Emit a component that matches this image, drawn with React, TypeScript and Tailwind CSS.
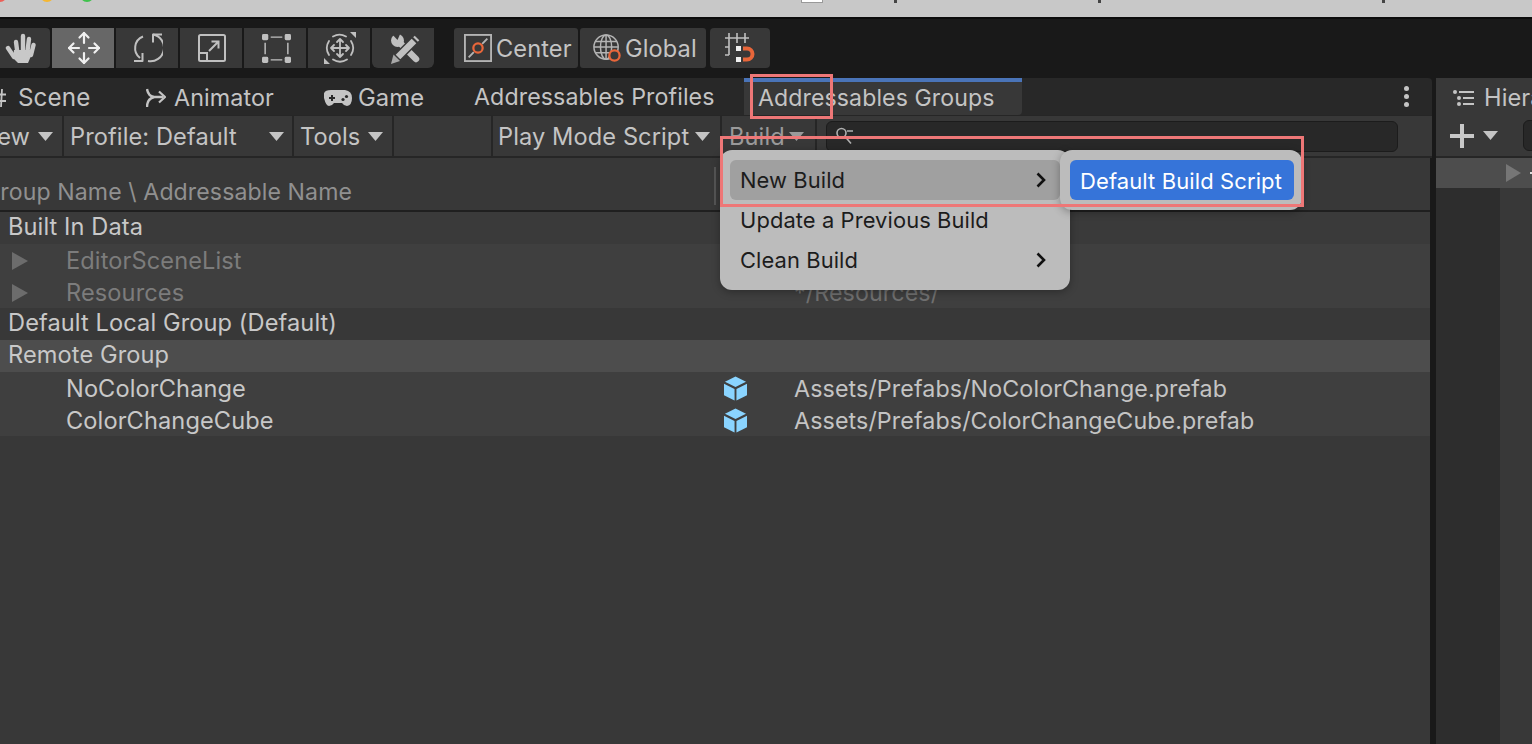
function Caret({ className = "" }: { className?: string }) {
  return (
    <svg width="15" height="9" viewBox="0 0 15 9" className={`shrink-0 ${className}`}>
      <path d="M0 0h15l-7.5 9z" fill="currentColor" />
    </svg>
  );
}

function RowArrow() {
  return (
    <svg width="16" height="18" viewBox="0 0 16 18" className="shrink-0">
      <path d="M0 0l16 9L0 18z" fill="#6c6c6c" />
    </svg>
  );
}

function Chevron() {
  return (
    <svg width="10" height="16" viewBox="0 0 10 16" fill="none" stroke="#111111" strokeWidth="2.6">
      <path d="M1.5 1.5L8 8l-6.5 6.5" />
    </svg>
  );
}

function HandIcon() {
  return (
    <svg width="31" height="31" viewBox="0 0 31 31" fill="#c8c8c8">
      <path d="M9 17h18l-1 6-3 7H13l-5-5z" />
      <g stroke="#c8c8c8" strokeWidth="4.4" strokeLinecap="round" fill="none">
        <path d="M11 9l1.2 9" />
        <path d="M18 3v15" />
        <path d="M24 6l-1.5 12" />
        <path d="M28.5 12L26 22" />
        <path d="M3 15l6 9" />
      </g>
    </svg>
  );
}

function MoveIcon() {
  return (
    <svg width="34" height="34" viewBox="0 0 34 34" fill="none" stroke="#f0f0f0" strokeWidth="2.2" strokeLinecap="round" strokeLinejoin="round">
      <path d="M17 2v10M17 22v10M2 17h10M22 17h10" />
      <path d="M12.5 6.5L17 2l4.5 4.5M12.5 27.5L17 32l4.5-4.5M6.5 12.5L2 17l4.5 4.5M27.5 12.5L32 17l-4.5 4.5" />
    </svg>
  );
}

function RotateIcon() {
  return (
    <svg width="30" height="30" viewBox="0 0 30 30" fill="none" stroke="#c0c0c0" strokeWidth="2" strokeLinejoin="round">
      <path d="M10 3.5A12.5 12.5 0 0 0 7 25" />
      <path d="M20 1.5A12.5 12.5 0 0 1 15 28" />
      <path d="M1 28h8.5v-8" />
      <path d="M29 1.5h-9v8" />
    </svg>
  );
}

function ScaleIcon() {
  return (
    <svg width="28" height="28" viewBox="0 0 28 28" fill="none" stroke="#c0c0c0" strokeWidth="2">
      <rect x="1" y="1" width="26" height="26" rx="1.5" />
      <path d="M1 19h8v8" />
      <path d="M11 17L20.5 7.5M13.5 7.5h7v7" />
    </svg>
  );
}

function RectIcon() {
  return (
    <svg width="29" height="29" viewBox="0 0 30 30" fill="#c0c0c0" stroke="none">
      <rect x="0" y="0" width="6.5" height="6.5" rx="1.5" />
      <rect x="23.5" y="0" width="6.5" height="6.5" rx="1.5" />
      <rect x="0" y="23.5" width="6.5" height="6.5" rx="1.5" />
      <rect x="23.5" y="23.5" width="6.5" height="6.5" rx="1.5" />
      <path d="M9 2.5h12v1.5H9zM9 26h12v1.5H9zM2.5 9H4v12H2.5zM26 9h1.5v12H26z" />
    </svg>
  );
}

function TransformIcon() {
  return (
    <svg width="32" height="32" viewBox="0 0 32 32" fill="none" stroke="#c0c0c0" strokeWidth="1.8" strokeLinecap="round" strokeLinejoin="round">
      <path d="M26 0h6v6z M0 32v-6l6 6z" fill="#c0c0c0" stroke="none" />
      <path d="M9 4.5a13 13 0 0 1 13 0M27 9a13 13 0 0 1 0 14M23 27.5a13 13 0 0 1-14 0M5 23a13 13 0 0 1 0-14" />
      <path d="M16 7v18M7 16h18M13 10l3-3 3 3M13 22l3 3 3-3M10 13l-3 3 3 3M22 13l3 3-3 3" />
    </svg>
  );
}

function BuildToolsIcon() {
  return (
    <svg width="30" height="31" viewBox="0 0 30 31" fill="none">
      {/* wrench */}
      <circle cx="7.5" cy="7.5" r="6.5" fill="#c0c0c0" />
      <path d="M0 -1L7.5 7L11 -1z" fill="#383838" />
      <path d="M10 10l16 16" stroke="#c0c0c0" strokeWidth="6.5" strokeLinecap="round" />
      {/* pencil, sits on top of the wrench */}
      <path d="M7 25L24 8" stroke="#383838" strokeWidth="9.5" />
      <path d="M8 24L24 8" stroke="#c0c0c0" strokeWidth="6.5" />
      <path d="M25.5 6.5L27 5" stroke="#c0c0c0" strokeWidth="6.5" />
      <path d="M1 31l2.5-9.5 6.5 6.5z" fill="#a8a8a8" />
    </svg>
  );
}

function CenterIcon() {
  return (
    <svg width="28" height="28" viewBox="0 0 30 30" fill="none" className="shrink-0">
      <rect x="1" y="1" width="28" height="28" stroke="#b4b4b4" strokeWidth="2" />
      <path d="M5 25l5.5-5.5M19.5 10.5L25 5" stroke="#b4b4b4" strokeWidth="2" />
      <circle cx="15" cy="15" r="5" stroke="#e8663a" strokeWidth="2.4" />
    </svg>
  );
}

function GlobalIcon() {
  return (
    <svg width="28" height="28" viewBox="0 0 30 30" fill="none" stroke="#b4b4b4" strokeWidth="1.6" className="shrink-0">
      <circle cx="14" cy="14" r="13" />
      <ellipse cx="14" cy="14" rx="6" ry="13" />
      <path d="M14 1v26M2.5 8h23M1 14h26M2.5 20h23" />
      <circle cx="23" cy="23" r="5.5" fill="#383838" stroke="#e8663a" strokeWidth="2.4" />
    </svg>
  );
}

function SnapIcon() {
  return (
    <svg width="30" height="30" viewBox="0 0 30 30" fill="none">
      <path d="M0 5h24M4 0v22M12 0v10M20 0v10M0 14h4M0 22h4" stroke="#c0c0c0" strokeWidth="1.6" />
      <rect x="11" y="13" width="5" height="5" fill="#f0f0f0" />
      <rect x="11" y="24" width="5" height="5" fill="#f0f0f0" />
      <path d="M18 15.5h4a5.5 5.5 0 0 1 0 11h-4" stroke="#e8663a" strokeWidth="4" />
    </svg>
  );
}

function AnimatorIcon() {
  return (
    <svg width="20" height="20" viewBox="0 0 20 20" fill="none" stroke="#c4c4c4" strokeWidth="2.4" strokeLinejoin="round">
      <path d="M1 1q1 7 7 8h9" />
      <path d="M1 19q0-8 7-10" />
      <path d="M13 3.5L19 9l-6 5.5" strokeWidth="2.2" />
    </svg>
  );
}

function GameIcon() {
  return (
    <svg width="28" height="16" viewBox="0 0 28 16">
      <path d="M7 0h14q7 1 7 8t-5 8q-3 0-5-3h-8q-2 3-5 3T0 8t7-8z" fill="#c4c4c4" />
      <path d="M5 7h2V5h2v2h2v2H9v2H7V9H5z" fill="#282828" />
      <circle cx="19" cy="9.5" r="1.6" fill="#282828" />
      <circle cx="22.5" cy="6.5" r="1.6" fill="#282828" />
    </svg>
  );
}

function CubeIcon() {
  return (
    <svg width="23" height="25" viewBox="0 0 24 25" className="shrink-0">
      <path d="M12 0l11 5.5L12 11 1 5.5z" fill="#8ad4ff" />
      <path d="M0 7.5l11 5.5v12L0 19.5z" fill="#8ad4ff" />
      <path d="M24 7.5L13 13v12l11-5.5z" fill="#8ad4ff" />
    </svg>
  );
}

function Cell({ active, className = "", children }: { active?: boolean; className?: string; children: React.ReactNode }) {
  return (
    <div className={`h-full flex items-center ${active ? "bg-[#676767]" : "bg-[#383838]"} ${className}`}>
      {children}
    </div>
  );
}

function Seg({ className = "", children }: { className?: string; children?: React.ReactNode }) {
  return <div className={`h-full bg-[#383838] flex items-center shrink-0 ${className}`}>{children}</div>;
}

function Row({ bg, indent, arrow, dim, name, cube, path, pathDim }: {
  bg: string; indent?: boolean; arrow?: boolean; dim?: boolean; name: string; cube?: boolean; path?: string; pathDim?: boolean;
}) {
  return (
    <div className={`h-[32px] flex items-center ${bg} ${indent ? "pt-[1px]" : "pb-[2px]"}`}>
      <div className={`w-[724px] shrink-0 flex items-center text-[23.6px] ${indent ? "pl-[12px]" : "pl-[8px]"}`}>
        {indent && <div className="w-[54px] shrink-0">{arrow && <RowArrow />}</div>}
        <span className={dim ? "text-[#7c7c7c]" : "text-[#c8c8c8]"}>{name}</span>
      </div>
      <div className="w-[71px] shrink-0 flex items-center">{cube && <CubeIcon />}</div>
      {path && <span className={`text-[23.25px] -ml-[1px] ${pathDim ? "text-[#707070]" : "text-[#c4c4c4]"}`}>{path}</span>}
    </div>
  );
}

export default function App() {
  return (
    <div className="relative w-[1532px] h-[744px] overflow-hidden flex flex-col bg-[#191919] font-['Inter',sans-serif] text-[23.6px] leading-none tracking-[0.1px] text-[#c4c4c4]">
      {/* window title bar, only its bottom edge is in the shot */}
      <div className="h-[19px] shrink-0 bg-[#c8c8c8] border-b-2 border-[#0c0c0c] flex items-start overflow-hidden">
        <div className="w-[14px] h-[14px] rounded-full bg-[#ec5f57] -mt-[12px] -ml-[7px] shrink-0" />
        <div className="w-[14px] h-[14px] rounded-full bg-[#f5b731] -mt-[12px] ml-[33px] shrink-0" />
        <div className="w-[14px] h-[14px] rounded-full bg-[#3fc24c] -mt-[12px] ml-[26px] shrink-0" />
        <div className="w-[22px] h-[14px] bg-white border border-[#999999] -mt-[11px] ml-[707px] shrink-0" />
        <div className="w-[3px] h-[3px] bg-[#444444] ml-[71px] shrink-0" />
        <div className="w-[3px] h-[3px] bg-[#444444] ml-[201px] shrink-0" />
        <div className="w-[3px] h-[3px] bg-[#444444] ml-[281px] shrink-0" />
      </div>

      {/* main toolbar */}
      <div className="h-[59px] shrink-0 flex items-start pt-[9px]">
        <div className="h-[40px] flex gap-[2px]">
          <Cell className="w-[50px] rounded-r-[4px] pl-[5px]"><HandIcon /></Cell>
          <Cell active className="w-[62px] justify-center pl-[2px]"><MoveIcon /></Cell>
          <Cell className="w-[62px] justify-center pl-[2px]"><RotateIcon /></Cell>
          <Cell className="w-[62px] justify-center pl-[2px]"><ScaleIcon /></Cell>
          <Cell className="w-[62px] justify-center pl-[2px]"><RectIcon /></Cell>
          <Cell className="w-[62px] justify-center pl-[2px]"><TransformIcon /></Cell>
          <Cell className="w-[62px] rounded-b-[6px] justify-center pl-[4px]"><BuildToolsIcon /></Cell>
        </div>
        <div className="h-[40px] flex ml-[20px]">
          <Cell className="w-[124px] rounded-[3px] gap-[4px] pl-[10px]"><CenterIcon /><span className="pt-[2px]">Center</span></Cell>
          <Cell className="w-[126px] ml-[2px] rounded-[3px] gap-[4px] pl-[13px]"><GlobalIcon /><span className="pt-[2px]">Global</span></Cell>
          <Cell className="w-[60px] ml-[4px] rounded-[4px] justify-center"><SnapIcon /></Cell>
        </div>
      </div>

      <div className="flex-1 min-h-0 flex gap-[4px]">
        {/* addressables window */}
        <div className="w-[1432px] shrink-0 flex flex-col">
          <div className="h-[37px] shrink-0 bg-[#282828] rounded-tr-[4px] flex items-center relative text-[23.3px]">
            <div className="w-[130px] h-full shrink-0 flex items-center overflow-hidden pt-[3px]">
              <svg width="6" height="18" viewBox="0 0 6 18" fill="none" stroke="#c4c4c4" strokeWidth="1.8" className="mr-[12px] shrink-0">
                <path d="M2 0L1 18M0 5.5h6M0 12h6" />
              </svg>
              <span className="text-[24.2px]">Scene</span>
            </div>
            <div className="w-[194px] h-full shrink-0 flex items-center pl-[16px] gap-[8px] pt-[3px]"><AnimatorIcon /><span>Animator</span></div>
            <div className="w-[150px] h-full shrink-0 flex items-center gap-[6px] pt-[3px]"><GameIcon /><span className="text-[23.8px]">Game</span></div>
            <div className="w-[270px] h-full shrink-0 flex items-center pt-[3px]"><span className="text-[23.2px]">Addressables Profiles</span></div>
            <div className="w-[278px] h-full shrink-0 flex items-center pl-[14px] bg-[#383838] border-t-4 border-[#4a74b8] rounded-br-[4px]"><span className="text-[23.1px]">Addressables Groups</span></div>
            <div className="flex-1" />
            <div className="flex flex-col gap-[3px] mr-[23px]">
              <div className="w-[5px] h-[5px] rounded-full bg-[#c4c4c4]" />
              <div className="w-[5px] h-[5px] rounded-full bg-[#c4c4c4]" />
              <div className="w-[5px] h-[5px] rounded-full bg-[#c4c4c4]" />
            </div>
          </div>

          <div className="h-[43px] shrink-0 bg-[#262626] pt-[1px] pb-[2px] flex gap-[2px]">
            <Seg className="w-[62px] justify-end pr-[9px] gap-[8px]"><span className="pt-[1px]">View</span><Caret /></Seg>
            <Seg className="w-[228px] pl-[6px]"><span className="pt-[1px]">Profile: Default</span><Caret className="ml-auto mr-[8px]" /></Seg>
            <Seg className="w-[98px] pl-[6px] gap-[8px]"><span className="pt-[1px]">Tools</span><Caret /></Seg>
            <Seg className="w-[97px]" />
            <Seg className="w-[227px] pl-[5px] gap-[6px]"><span className="pt-[1px]">Play Mode Script</span><Caret /></Seg>
            <Seg className="w-[93px] pl-[7px] gap-[4px] text-[#9a9a9a]"><span className="pt-[1px]">Build</span><Caret /></Seg>
            <Seg className="flex-1 pl-[9px] pr-[34px]">
              <div className="w-full h-[31px] rounded-[6px] bg-[#282828] border border-[#1c1c1c] flex items-center pl-[9px]">
                <svg width="20" height="18" viewBox="0 0 20 18" fill="none" stroke="#b0b0b0" strokeWidth="1.6">
                  <circle cx="5.5" cy="6" r="4.5" />
                  <path d="M9 9.5l6 7M11 4h6" />
                </svg>
              </div>
            </Seg>
          </div>

          <div className="flex-1 min-h-0 mr-[2px] bg-[#383838] flex flex-col">
            <div className="h-[54px] shrink-0 border-b-2 border-[#1f1f1f] flex items-end pb-[6px] text-[23.1px] text-[#909090] relative">
              <span className="-ml-[17px]">Group Name \ Addressable Name</span>
              <div className="absolute left-[714px] top-[9px] h-[38px] w-[2px] bg-[#555555]" />
            </div>
            <Row bg="bg-[#3a3a3a]" name="Built In Data" />
            <Row bg="bg-[#3f3f3f]" indent arrow dim name="EditorSceneList" />
            <Row bg="bg-[#3f3f3f]" indent arrow dim name="Resources" path="*/Resources/" pathDim />
            <Row bg="bg-[#383838]" name="Default Local Group (Default)" />
            <Row bg="bg-[#4d4d4d]" name="Remote Group" />
            <Row bg="bg-[#3f3f3f]" indent name="NoColorChange" cube path="Assets/Prefabs/NoColorChange.prefab" />
            <Row bg="bg-[#3f3f3f]" indent name="ColorChangeCube" cube path="Assets/Prefabs/ColorChangeCube.prefab" />
          </div>
        </div>

        {/* hierarchy window */}
        <div className="flex-1 min-w-0 flex flex-col">
          <div className="h-[37px] shrink-0 bg-[#383838] flex items-center pl-[17px] gap-[10px] overflow-hidden pt-[3px]">
            <svg width="21" height="16" viewBox="0 0 21 16" className="shrink-0" fill="#c4c4c4">
              <circle cx="2" cy="2" r="2" />
              <circle cx="6" cy="8" r="2" />
              <circle cx="6" cy="14" r="2" />
              <path d="M6 1h15v2H6zM10 7h11v2H10zM10 13h11v2H10z" />
            </svg>
            <span>Hierarchy</span>
          </div>
          <div className="h-[43px] shrink-0 bg-[#383838] border-b-2 border-[#262626] flex items-center pl-[14px] overflow-hidden">
            <svg width="24" height="24" viewBox="0 0 24 24" className="shrink-0" fill="#c8c8c8"><path d="M10 0h4v10h10v4H14v10h-4V14H0v-4h10z" /></svg>
            <Caret className="ml-[9px]" />
            <div className="w-[40px] h-[31px] ml-[25px] rounded-[6px] bg-[#282828] border border-[#1c1c1c] shrink-0" />
          </div>
          <div className="h-[30px] shrink-0 bg-[#4d4d4d] flex items-center pl-[70px] gap-[9px]">
            <svg width="15" height="18" viewBox="0 0 15 18" className="shrink-0"><path d="M0 0l15 9L0 18z" fill="#767676" /></svg>
            <div className="w-[2px] h-[2px] bg-[#dddddd]" />
          </div>
          <div className="flex-1 flex">
            <div className="w-[64px] bg-[#2d2d2d]" />
            <div className="flex-1 bg-[#383838]" />
          </div>
        </div>

        {/* build dropdown */}
        <div className="absolute left-[720px] top-[150px] w-[350px] h-[140px] rounded-[12px] bg-[#bcbcbc] shadow-[0_2px_8px_rgba(0,0,0,0.3)] p-[10px] text-[#1c1c1c] text-[21.9px] z-10">
          <div className="h-[40px] rounded-[6px] bg-[#a0a0a0] flex items-center pl-[10px] pr-[14px] justify-between">
            <span className="pt-[2px]">New Build</span>
            <Chevron />
          </div>
          <div className="h-[40px] flex items-center pl-[10px]"><span className="pt-[2px]">Update a Previous Build</span></div>
          <div className="h-[40px] flex items-center pl-[10px] pr-[14px] justify-between">
            <span className="pt-[2px]">Clean Build</span>
            <Chevron />
          </div>
        </div>
        <div className="absolute left-[1060px] top-[150px] w-[242px] h-[60px] rounded-[12px] bg-[#bcbcbc] shadow-[0_2px_8px_rgba(0,0,0,0.3)] p-[10px] pr-[8px] text-[22px] z-20">
          <div className="h-[40px] rounded-[6px] bg-[#3674d9] text-white flex items-center pl-[10px]"><span className="pt-[2px]">Default Build Script</span></div>
        </div>

        {/* annotation boxes */}
        <div className="absolute left-[750px] top-[74px] w-[83px] h-[45px] border-[3px] border-[#ee7777] z-30" />
        <div className="absolute left-[720px] top-[136px] w-[584px] h-[71px] border-[3px] border-[#ee7777] z-30" />
      </div>
    </div>
  );
}
